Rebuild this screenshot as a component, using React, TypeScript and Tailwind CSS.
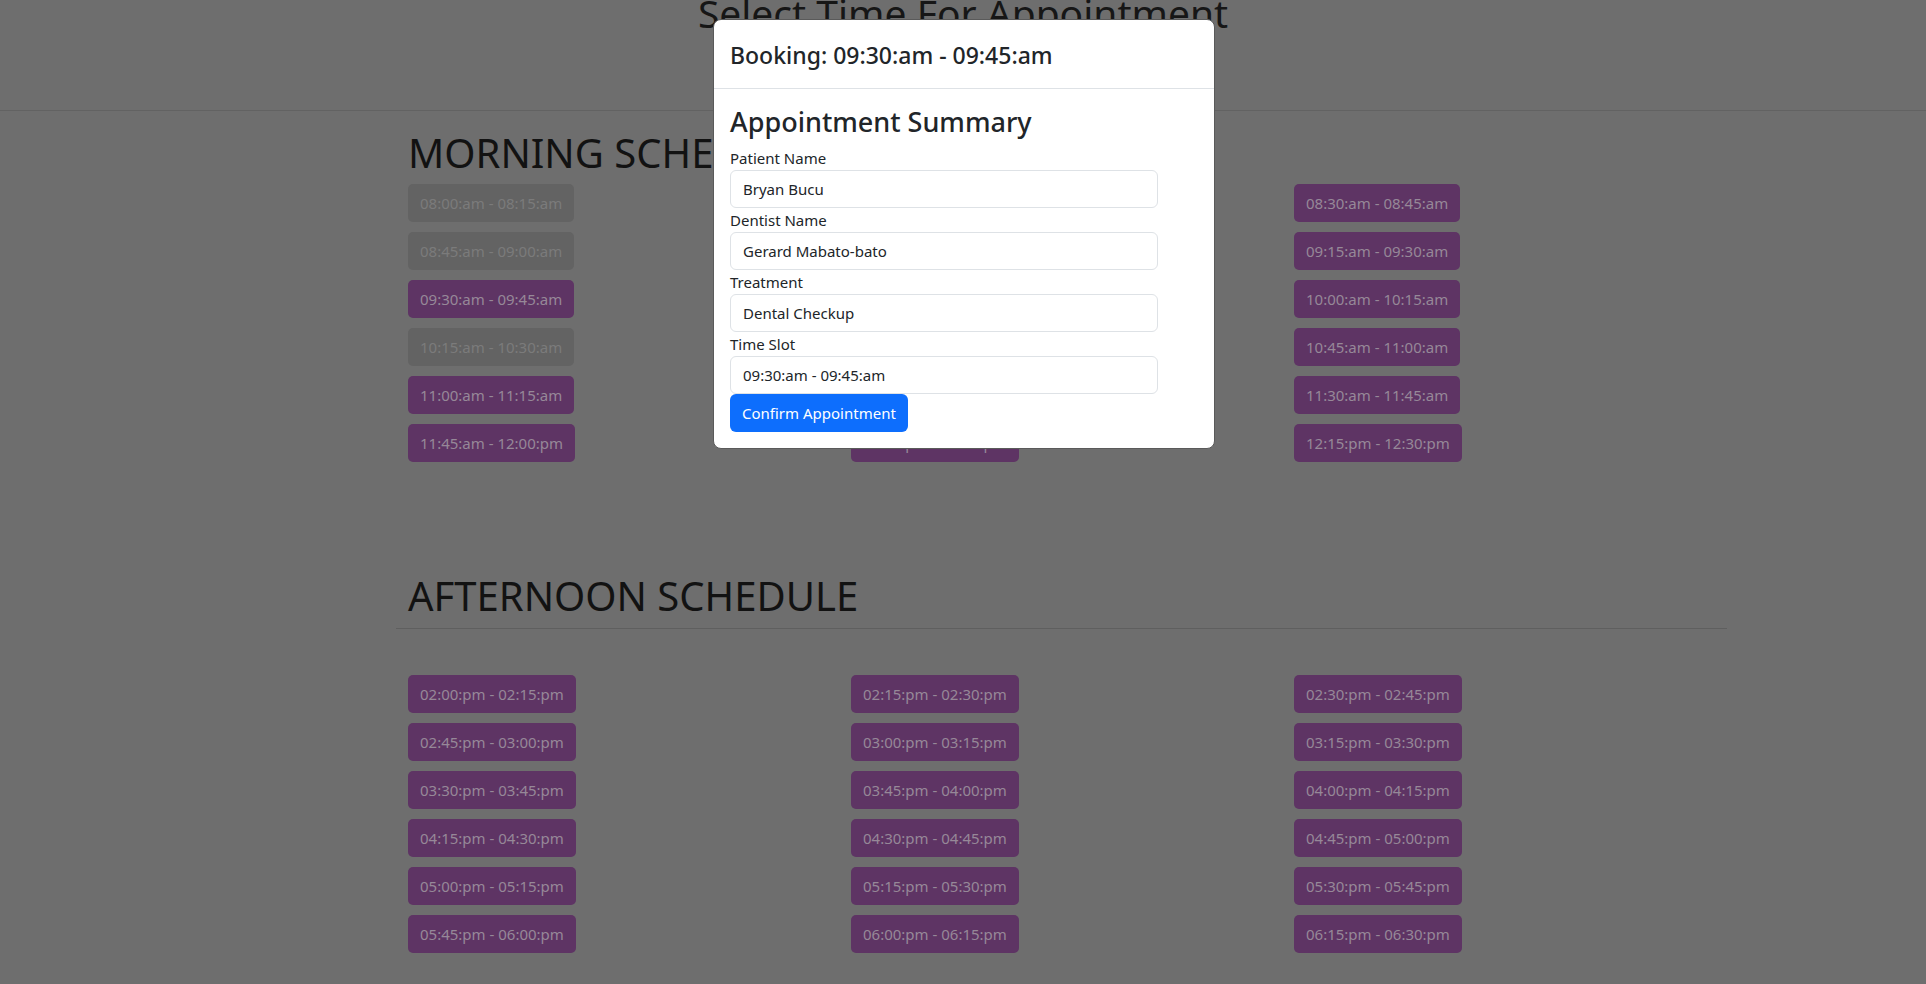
import React from "react";

type Slot = { t: string; off?: boolean };

const morning: Slot[][] = [
  [
    { t: "08:00:am - 08:15:am", off: true },
    { t: "08:45:am - 09:00:am", off: true },
    { t: "09:30:am - 09:45:am" },
    { t: "10:15:am - 10:30:am", off: true },
    { t: "11:00:am - 11:15:am" },
    { t: "11:45:am - 12:00:pm" },
  ],
  [
    { t: "08:15:am - 08:30:am" },
    { t: "09:00:am - 09:15:am" },
    { t: "09:45:am - 10:00:am" },
    { t: "10:30:am - 10:45:am" },
    { t: "11:15:am - 11:30:am" },
    { t: "12:00:pm - 12:15:pm" },
  ],
  [
    { t: "08:30:am - 08:45:am" },
    { t: "09:15:am - 09:30:am" },
    { t: "10:00:am - 10:15:am" },
    { t: "10:45:am - 11:00:am" },
    { t: "11:30:am - 11:45:am" },
    { t: "12:15:pm - 12:30:pm" },
  ],
];

const afternoon: Slot[][] = [
  [
    { t: "02:00:pm - 02:15:pm" },
    { t: "02:45:pm - 03:00:pm" },
    { t: "03:30:pm - 03:45:pm" },
    { t: "04:15:pm - 04:30:pm" },
    { t: "05:00:pm - 05:15:pm" },
    { t: "05:45:pm - 06:00:pm" },
  ],
  [
    { t: "02:15:pm - 02:30:pm" },
    { t: "03:00:pm - 03:15:pm" },
    { t: "03:45:pm - 04:00:pm" },
    { t: "04:30:pm - 04:45:pm" },
    { t: "05:15:pm - 05:30:pm" },
    { t: "06:00:pm - 06:15:pm" },
  ],
  [
    { t: "02:30:pm - 02:45:pm" },
    { t: "03:15:pm - 03:30:pm" },
    { t: "04:00:pm - 04:15:pm" },
    { t: "04:45:pm - 05:00:pm" },
    { t: "05:30:pm - 05:45:pm" },
    { t: "06:15:pm - 06:30:pm" },
  ],
];

function SlotButton({ s }: { s: Slot }) {
  return (
    <div
      className={
        s.off
          ? "h-[38px] px-3 flex items-center rounded-[5px] bg-[#636363] text-[#7b7b7b] text-[15px] whitespace-nowrap"
          : "h-[38px] px-3 flex items-center rounded-[5px] bg-[#5e3464] text-[#968898] text-[15px] whitespace-nowrap"
      }
    >
      {s.t}
    </div>
  );
}

function Grid({ cols }: { cols: Slot[][] }) {
  return (
    <div className="grid grid-cols-[443px_443px_443px] pl-[12px]">
      {cols.map((col, i) => (
        <div key={i} className="flex flex-col items-start gap-[10px]">
          {col.map((s) => (
            <SlotButton key={s.t} s={s} />
          ))}
        </div>
      ))}
    </div>
  );
}

function Field({ label, value }: { label: string; value: string }) {
  return (
    <div className="flex flex-col">
      <label className="text-[15px] leading-[24px] text-[#212529]">{label}</label>
      <div className="w-[428px] h-[38px] border border-[#dee2e6] rounded-[6px] px-3 flex items-center text-[15px] text-[#212529]">
        {value}
      </div>
    </div>
  );
}

export default function App() {
  return (
    <div className="relative w-[1926px] h-[984px] overflow-hidden bg-[#6e6e6e] font-['Noto_Sans',sans-serif]">
      <div className="h-[111px] border-b border-[#626262] flex justify-center">
        <h1 className="text-[39px] leading-[48px] mt-[-11px] text-[#161616] font-normal">
          Select Time For Appointment
        </h1>
      </div>

      <div className="ml-[396px] w-[1331px]">
        <h2 className="text-[40px] leading-[48px] text-[#121212] pl-[12px] mt-[18px] mb-[7px]">
          MORNING SCHEDULE
        </h2>
        <Grid cols={morning} />

        <h2 className="text-[40px] leading-[48px] text-[#121212] pl-[12px] mt-[110px] pb-[8px] border-b border-[#5f5f5f]">
          AFTERNOON SCHEDULE
        </h2>
        <div className="h-[46px]" />
        <Grid cols={afternoon} />
      </div>

      <div className="absolute left-[713px] top-[19px] w-[502px] bg-white rounded-[8px] border border-[#5a5a5a]">
        <div className="h-[69px] border-b border-[#dee2e6] px-4 pt-[3px] flex items-center">
          <h5 className="text-[23px] font-medium text-[#212529]">Booking: 09:30:am - 09:45:am</h5>
        </div>
        <div className="px-4 pt-[17px] pb-4">
          <h4 className="text-[27px] leading-[32px] font-medium text-[#212529] mb-[8px]">
            Appointment Summary
          </h4>
          <Field label="Patient Name" value="Bryan Bucu" />
          <Field label="Dentist Name" value="Gerard Mabato-bato" />
          <Field label="Treatment" value="Dental Checkup" />
          <Field label="Time Slot" value="09:30:am - 09:45:am" />
          <button className="h-[38px] px-3 rounded-[6px] bg-[#0d6efd] text-white text-[15px]">
            Confirm Appointment
          </button>
        </div>
      </div>
    </div>
  );
}
